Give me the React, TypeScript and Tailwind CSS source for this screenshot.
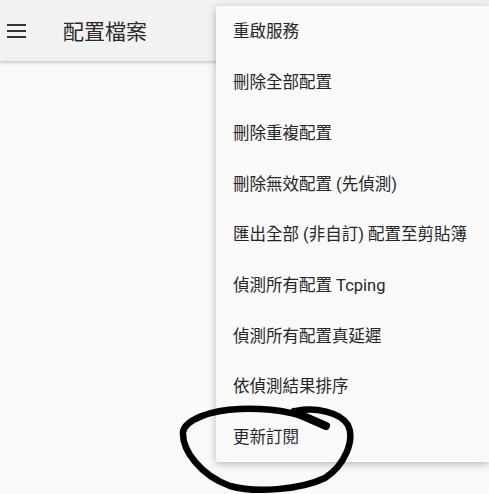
import React from "react";

const items = [
  "重啟服務",
  "刪除全部配置",
  "刪除重複配置",
  "刪除無效配置 (先偵測)",
  "匯出全部 (非自訂) 配置至剪貼簿",
  "偵測所有配置 Tcping",
  "偵測所有配置真延遲",
  "依偵測結果排序",
  "更新訂閱",
];

export default function App() {
  return (
    <div
      className="relative w-[489px] h-[494px] overflow-hidden bg-[#fafafa]"
      style={{ fontFamily: '"Roboto", "Noto Sans CJK TC", sans-serif' }}
    >
      <header className="flex h-[61px] items-center bg-[#f2f2f2] shadow-[0_2px_3px_rgba(0,0,0,0.18)]">
        <div className="ml-[7px] flex w-[19px] flex-col gap-[4px]">
          <span className="block h-[2px] bg-[#333]" />
          <span className="block h-[2px] bg-[#333]" />
          <span className="block h-[2px] bg-[#333]" />
        </div>
        <h1 className="ml-[37px] pt-[3px] text-[21px] text-[#2a2a2a] leading-none">配置檔案</h1>
      </header>

      <div className="absolute left-[216px] top-[6px] w-[273px] bg-[#fafafa] shadow-[0_2px_8px_rgba(0,0,0,0.28)] rounded-l-[2px]">
        {items.map((t) => (
          <div key={t} className="flex h-[50.7px] items-center pl-[17px] pt-[3px] text-[16.5px] text-[#262626] whitespace-nowrap">
            {t}
          </div>
        ))}
      </div>

      <svg className="absolute left-0 top-0 pointer-events-none" width="489" height="494" viewBox="0 0 489 494">
        <path
          d="M 323 425 C 300 412, 270 408, 240 409 C 210 410, 185 420, 183 432 C 182 450, 200 475, 230 486 C 255 493, 300 490, 325 478 C 345 465, 355 440, 348 425 C 340 412, 315 407, 296 411"
          fill="none"
          stroke="#000"
          strokeWidth="6.5"
          strokeLinecap="round"
        />
        <path d="M 294 412 L 326 426" stroke="#000" strokeWidth="8" strokeLinecap="round" />
      </svg>
    </div>
  );
}
